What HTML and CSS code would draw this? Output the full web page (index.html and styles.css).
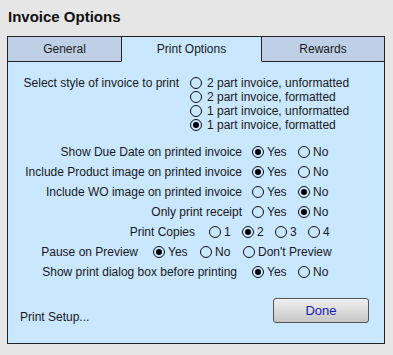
FILE: index.html
```html
<!DOCTYPE html>
<html>
	<head>
		<meta charset="utf-8">
		<title>Invoice Options</title>
		<link rel="stylesheet" href="styles.css">
	</head>
	<body>
		<div class="title">Invoice Options</div>
		<div class="panel">
			<div class="tabs">
				<div class="tab tab-general">General</div>
				<div class="tab tab-print active">Print Options</div>
				<div class="tab tab-rewards">Rewards</div>
			</div>
			<div class="content">
				<div class="style-row">
					<div class="label label-style">Select style of invoice to print</div>
					<div class="style-list">
						<div class="opt"><span class="radio"></span>2 part invoice, unformatted</div>
						<div class="opt"><span class="radio"></span>2 part invoice, formatted</div>
						<div class="opt"><span class="radio"></span>1 part invoice, unformatted</div>
						<div class="opt"><span class="radio on"></span>1 part invoice, formatted</div>
					</div>
				</div>

				<div class="row">
					<div class="label w-yesno">Show Due Date on printed invoice</div>
					<div class="opt w46"><span class="radio on"></span>Yes</div>
					<div class="opt"><span class="radio"></span>No</div>
				</div>
				<div class="row">
					<div class="label w-yesno">Include Product image on printed invoice</div>
					<div class="opt w46"><span class="radio on"></span>Yes</div>
					<div class="opt"><span class="radio"></span>No</div>
				</div>
				<div class="row">
					<div class="label w-yesno">Include WO image on printed invoice</div>
					<div class="opt w46"><span class="radio"></span>Yes</div>
					<div class="opt"><span class="radio on"></span>No</div>
				</div>
				<div class="row">
					<div class="label w-yesno">Only print receipt</div>
					<div class="opt w46"><span class="radio"></span>Yes</div>
					<div class="opt"><span class="radio on"></span>No</div>
				</div>
				<div class="row">
					<div class="label w-copies">Print Copies</div>
					<div class="opt w33"><span class="radio"></span>1</div>
					<div class="opt w33"><span class="radio on"></span>2</div>
					<div class="opt w33"><span class="radio"></span>3</div>
					<div class="opt"><span class="radio"></span>4</div>
				</div>
				<div class="row">
					<div class="label w-pause">Pause on Preview</div>
					<div class="opt w47"><span class="radio on"></span>Yes</div>
					<div class="opt w43"><span class="radio"></span>No</div>
					<div class="opt"><span class="radio"></span>Don't Preview</div>
				</div>
				<div class="row">
					<div class="label w-dialog">Show print dialog box before printing</div>
					<div class="opt w46"><span class="radio on"></span>Yes</div>
					<div class="opt"><span class="radio"></span>No</div>
				</div>

				<div class="footer">
					<div class="setup">Print Setup...</div>
					<button class="done">Done</button>
				</div>
			</div>
		</div>
	</body>
</html>
```

FILE: styles.css
```css
* {
	margin:0;
	padding:0;
	box-sizing: border-box;
}
body {
	background-color: #e6e6e6;
	font-family: "Liberation Sans", Arial, sans-serif;
	font-size: 12px;
	color: #1a1a1a;
	width:393px;
	height:355px;
	overflow: hidden;
}
.title {
	font-size: 15px;
	font-weight: bold;
	line-height: 18px;
	padding: 8px 0 0 8px;
	color: #111;
}
.panel {
	margin: 10px 0 0 7px;
	width: 378px;
	border: 1px solid #222;
	background-color: #c9e7ff;
}
.tabs {
	display:flex;
	height:25px;
}
.tab {
	display:flex;
	align-items:center;
	justify-content:center;
	height:25px;
	background-color: #bfd0e6;
	border-bottom: 1px solid #222;
}
.tab-general {
	width:113px;
}
.tab.active {
	width:141px;
	background-color: #c9e7ff;
	border-left: 1px solid #222;
	border-right: 1px solid #222;
	border-bottom-color: transparent;
}
.tab-rewards {
	flex:auto;
}
.content {
	padding: 14px 15px 20px 0;
}
.style-row {
	display:flex;
	margin-bottom: 10px;
}
.label {
	flex:none;
	text-align: right;
	white-space: nowrap;
}
.label-style {
	width:171px;
	margin-right: 11px;
	line-height: 14px;
}
.style-list .opt {
	line-height: 14px;
	height:14px;
}
.style-list .radio {
	margin-right: 5px;
}
.row {
	display:flex;
	align-items:center;
	height:20px;
}
.w-yesno {
	width:234px;
	margin-right: 10px;
}
.w-copies {
	width:187px;
	margin-right: 14px;
}
.w-pause {
	width:130px;
	margin-right: 15px;
}
.w-dialog {
	width:229px;
	margin-right: 15px;
}
.opt {
	display:flex;
	align-items:center;
	white-space: nowrap;
}
.w46 { width:46px; }
.w33 { width:33px; }
.w47 { width:47px; }
.w43 { width:43px; }
.radio {
	flex:none;
	display:flex;
	align-items:center;
	justify-content:center;
	width:12px;
	height:12px;
	border: 1px solid #111;
	border-radius: 50%;
	margin-right: 3px;
}
.radio.on::after {
	content: "";
	width:6px;
	height:6px;
	border-radius: 50%;
	background-color: #000;
}
.footer {
	display:flex;
	justify-content: space-between;
	align-items: flex-end;
	margin-top: 16px;
	padding-left: 12px;
}
.setup {
	line-height: 15px;
	margin-bottom: -2px;
}
.done {
	width:96px;
	height:25px;
	border: 1px solid #555;
	border-radius: 3px;
	background: linear-gradient(#f0f0f0, #c6c6c6);
	color: #1a1ab8;
	font-family: "Liberation Sans", Arial, sans-serif;
	font-size: 13px;
}
```
